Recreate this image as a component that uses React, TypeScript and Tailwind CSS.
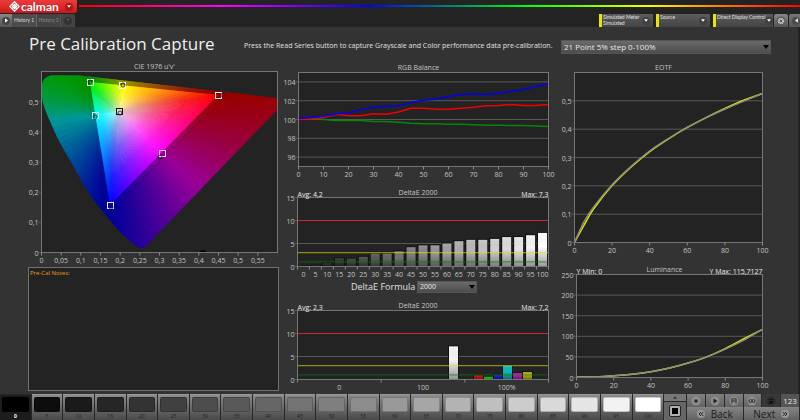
import React from 'react'
import { ChevronsLeft, ChevronsRight } from 'lucide-react'

type Point = [number, number]

type Box = { left: number; top: number; right: number; bottom: number }

type ChartProps = {
  title: string
  width: number
  height: number
  box: Box
  xMax: number
  yMin: number
  yMax: number
  xTicks: { at: number; label: string }[]
  xMarks?: number[]
  yTicks: number[]
  grid?: boolean
  low?: string
  high?: string
  children?: (x: (v: number) => number, y: (v: number) => number) => React.ReactNode
}

const levels = Array.from({ length: 21 }, (_, i) => i * 5)

const gray = (level: number) => {
  const c = Math.round(level * 2.55)
  return `rgb(${c},${c},${c})`
}

const redBalance = [100, 100.05, 100.2, 100.55, 100.4, 100.4, 100.6, 100.55, 100.8, 101.2, 101.2, 101.1, 101.1, 101.2, 101.3, 101.45, 101.5, 101.6, 101.5, 101.5, 101.6]
const greenBalance = [100.05, 100.05, 100, 99.9, 99.9, 99.9, 99.8, 99.8, 99.7, 99.6, 99.55, 99.55, 99.5, 99.5, 99.45, 99.4, 99.4, 99.35, 99.35, 99.3, 99.25]
const blueBalance = [100.1, 100.2, 100.35, 100.6, 100.7, 101.05, 101.3, 101.4, 101.45, 101.8, 102.05, 102.15, 102.45, 102.65, 102.75, 102.65, 102.8, 103, 103.2, 103.5, 103.8]
const grayDelta = [0, 0.2, 0.7, 1.8, 1.7, 2.1, 2.8, 2.8, 3.3, 4.2, 4.6, 4.6, 5, 5.5, 5.8, 5.8, 6, 6.4, 6.4, 6.8, 7.3]

const colorDelta = [
  { x: 168, value: 7.2, fill: '#f4f4f4' },
  { x: 193, value: 0.9, fill: '#c01010' },
  { x: 203, value: 0.6, fill: '#18b818' },
  { x: 213, value: 1, fill: '#1818c8' },
  { x: 222, value: 3, fill: '#10b8b8' },
  { x: 232, value: 1.4, fill: '#b818b8' },
  { x: 242, value: 1.6, fill: '#b8b010' },
]

const eotf: Point[] = [[0, 0], [5, 0.073], [10, 0.124], [20, 0.204], [30, 0.268], [40, 0.323], [50, 0.367], [60, 0.406], [70, 0.441], [80, 0.471], [90, 0.499], [100, 0.526]]
const eotfMeasured: Point[] = [[0, 0], [5, 0.06], [10, 0.117], [20, 0.201], [30, 0.266], [40, 0.321], [50, 0.366], [60, 0.406], [70, 0.441], [80, 0.473], [90, 0.502], [100, 0.526]]
const luminance: Point[] = [[0, 1], [10, 1.5], [20, 4], [30, 8], [40, 14], [50, 23], [60, 35], [70, 50], [80, 69], [90, 91], [100, 117]]
const luminanceMeasured: Point[] = [[0, 1], [10, 1.5], [20, 4], [30, 8], [40, 14], [50, 23], [60, 35], [70, 50], [80, 70], [90, 94], [100, 117]]

const line = (points: Point[], x: (v: number) => number, y: (v: number) => number) =>
  points.map(([a, b]) => `${x(a)},${y(b)}`).join(' ')

// Catmull-Rom spline through the points, written as cubic segments
const curve = (points: Point[], x: (v: number) => number, y: (v: number) => number) => {
  const p = points.map(([a, b]) => [x(a), y(b)])
  let d = `M${p[0]}`
  for (let i = 0; i < p.length - 1; i++) {
    const before = p[Math.max(i - 1, 0)]
    const after = p[Math.min(i + 2, p.length - 1)]
    const c1 = p[i].map((v, n) => v + (p[i + 1][n] - before[n]) / 6)
    const c2 = p[i + 1].map((v, n) => v - (after[n] - p[i][n]) / 6)
    d += `C${c1} ${c2} ${p[i + 1]}`
  }
  return d
}

const series = (values: number[]): Point[] => values.map((v, i) => [i * 5, v])

const steps = (from: number, to: number, by: number) => {
  const out = []
  for (let v = from; v <= to; v += by) out.push({ at: v, label: String(v) })
  return out
}

const Chart = ({ title, width, height, box, xMax, yMin, yMax, xTicks, xMarks, yTicks, grid = true, low, high, children }: ChartProps) => {
  const x = (v: number) => box.left + (v / xMax) * (box.right - box.left)
  const y = (v: number) => box.bottom - ((v - yMin) / (yMax - yMin)) * (box.bottom - box.top)
  const marks = xMarks ?? xTicks.map((t) => t.at)

  return (
    <svg viewBox={`0 0 ${width} ${height}`} className="block h-auto w-full text-[7px]" role="img" aria-label={title}>
      <rect x={box.left} y={box.top} width={box.right - box.left} height={box.bottom - box.top} fill="#232323" />
      {yTicks.map((t) => (
        <g key={t}>
          <line x1={box.left - 3} x2={grid ? box.right : box.left} y1={y(t)} y2={y(t)} stroke="#585858" />
          <text x={box.left - 3} y={y(t) + 3} textAnchor="end" fill="#c4c4c4">
            {String(t).replace('.', ',')}
          </text>
        </g>
      ))}
      {children?.(x, y)}
      <rect x={box.left} y={box.top} width={box.right - box.left} height={box.bottom - box.top} fill="none" stroke="#767676" />
      {marks.map((m) => (
        <line key={m} x1={x(m)} x2={x(m)} y1={box.bottom} y2={box.bottom + 3} stroke="#8a8a8a" />
      ))}
      {xTicks.map((t) => (
        <text key={t.label} x={x(t.at)} y={box.bottom + 10} textAnchor="middle" fill="#c4c4c4">
          {t.label}
        </text>
      ))}
      <text x={(box.left + box.right) / 2 - 5} y={box.top - 3} textAnchor="middle" fill="#c4c4c4">
        {title}
      </text>
      {low && <text x={box.left} y={box.top - 1} fill="#ececec">{low}</text>}
      {high && <text x={box.right} y={box.top - 1} textAnchor="end" fill="#ececec">{high}</text>}
    </svg>
  )
}

// Gamut corners and edge midpoints, clockwise from green.
// hold: how long a primary keeps its hue outside the gamut before it turns into the next mix
const gamut: { at: Point; rgb: number[]; hold: number }[] = [
  { at: [90, 22], rgb: [0, 255, 0], hold: 1.5 },
  { at: [122, 25], rgb: [255, 255, 0], hold: 1.7 },
  { at: [218, 35], rgb: [255, 0, 0], hold: 1.7 },
  { at: [162, 93], rgb: [255, 0, 255], hold: 1.5 },
  { at: [110, 145], rgb: [0, 0, 255], hold: 3 },
  { at: [95, 55], rgb: [0, 255, 255], hold: 3.2 },
]
const white: Point = [119, 52]
const locus = 'M138 187 C126 179 119 171 110 160 C101 149 94 141 87 130 C80 119 76 111 70 100 C63 88 58 80 53 68 C48 56 45 50 43 43 C41 34 41 27 43 21 Q46 15 55 15.3 L80 15.6 L277 38 L277 50 L146 186 Q142 190 138 187 Z'

const wedgeCount = 40

const gamutWedges = gamut.flatMap((from, i) => {
  const to = gamut[(i + 1) % gamut.length]
  const at = (t: number): Point => [
    from.at[0] + (to.at[0] - from.at[0]) * t,
    from.at[1] + (to.at[1] - from.at[1]) * t,
  ]
  return Array.from({ length: wedgeCount }, (_, k) => {
    const mid = (k + 0.5) / wedgeCount
    const mix = i % 2 === 0 ? mid ** from.hold : 1 - (1 - mid) ** from.hold
    const rgb = from.rgb.map((c, n) => c + (to.rgb[n] - c) * mid)
    const tint = (amount: number) => `rgb(${rgb.map((c) => Math.round(255 + (c - 255) * amount)).join(',')})`
    return {
      id: `wedge-${i}-${k}`,
      start: at(k / wedgeCount),
      end: at((k + 1.5) / wedgeCount),
      middle: at(mid),
      half: tint(0.6),
      most: tint(0.88),
      full: tint(1),
      outer: `rgb(${from.rgb.map((c, n) => Math.round((c + (to.rgb[n] - c) * mix) * 0.6)).join(',')})`,
    }
  })
})

const beyond = (p: Point, scale: number): Point => [
  white[0] + (p[0] - white[0]) * scale,
  white[1] + (p[1] - white[1]) * scale,
]

const CieDiagram = () => (
  <Chart
    title="CIE 1976 u'v'"
    width={281}
    height={207}
    box={{ left: 41.5, top: 11.5, right: 277.5, bottom: 192.5 }}
    xMax={0.6}
    yMin={0}
    yMax={0.6}
    xTicks={Array.from({ length: 12 }, (_, i) => ({ at: i * 0.05, label: String(Math.round(i * 5) / 100).replace('.', ',') }))}
    yTicks={[0, 0.1, 0.2, 0.3, 0.4, 0.5]}
    grid={false}
  >
    {() => (
      <>
        <defs>
          <clipPath id="locus">
            <path d={locus} />
          </clipPath>
          <clipPath id="gamut">
            <path d="M90 22 218 35 110 145Z" />
          </clipPath>
          {gamutWedges.map((w) => (
            <linearGradient key={w.id} id={w.id} gradientUnits="userSpaceOnUse" x1={white[0]} y1={white[1]} x2={w.middle[0]} y2={w.middle[1]}>
              <stop offset="0" stopColor="#fff" />
              <stop offset="0.4" stopColor={w.half} />
              <stop offset="0.7" stopColor={w.most} />
              <stop offset="1" stopColor={w.full} />
            </linearGradient>
          ))}
        </defs>
        <g clipPath="url(#locus)">
          {gamutWedges.map((w) => (
            <polygon key={w.id} points={[white, beyond(w.start, 12), beyond(w.end, 12)].join(' ')} fill={w.outer} />
          ))}
        </g>
        <g clipPath="url(#gamut)">
          {gamutWedges.map((w) => (
            <polygon key={w.id} points={[white, beyond(w.start, 1.2), beyond(w.end, 1.2)].join(' ')} fill={`url(#${w.id})`} />
          ))}
        </g>
        {gamut.map(({ at: [cx, cy] }, i) => (
          <rect key={i} x={cx - 2.5} y={cy - 2.5} width="6" height="6" fill="none" stroke="#f0f0f0" />
        ))}
        <rect x="116.5" y="48.5" width="6" height="6" fill="none" stroke="#111" />
        {[[90, 22], [123, 25], [223, 35], [160, 97], [111, 147], [95, 57], [120, 53]].map(([cx, cy]) => (
          <circle key={`${cx}-${cy}`} cx={cx} cy={cy} r="2" fill="none" stroke="#222" strokeOpacity="0.8" />
        ))}
        <path d="M200 192 a3 2 0 0 1 6 0Z" fill="#000" />
      </>
    )}
  </Chart>
)

const Thresholds = ({ left, right, y }: { left: number; right: number; y: (v: number) => number }) => (
  <>
    <line x1={left} x2={right} y1={y(10)} y2={y(10)} stroke="#c92a2a" />
    <line x1={left} x2={right} y1={y(3)} y2={y(3)} stroke="#e0e000" strokeOpacity="0.7" />
    <line x1={left} x2={right} y1={y(1)} y2={y(1)} stroke="#0a7a0a" strokeOpacity="0.7" />
  </>
)

const DeltaChart = ({ low, high, color }: { low: string; high: string; color?: boolean }) => (
  <Chart
    title="DeltaE 2000"
    width={276}
    height={97}
    box={{ left: 16.5, top: 17.5, right: 267.5, bottom: 86.5 }}
    xMax={color ? 3 : 21}
    yMin={0}
    yMax={15}
    xTicks={color ? ['0', '100', '100%'].map((label, i) => ({ at: i + 0.5, label })) : levels.map((l, i) => ({ at: i + 0.5, label: String(l) }))}
    xMarks={color ? [0, 1, 2, 3] : Array.from({ length: 22 }, (_, i) => i)}
    yTicks={[0, 5, 10, 15]}
    low={low}
    high={high}
  >
    {(x, y) => (
      <>
        <defs>
          <linearGradient id="bar-shade" x1="0" x2="0" y1="0" y2="1">
            <stop offset="0" stopColor="#fff" stopOpacity="0.1" />
            <stop offset="0.4" stopColor="#000" stopOpacity="0" />
            <stop offset="1" stopColor="#000" stopOpacity="0.4" />
          </linearGradient>
        </defs>
        {(color ? colorDelta : grayDelta.map((value, i) => ({ x: x(i) + 1.5, value, fill: gray(7 + levels[i] * 0.93) }))).map((bar) => (
          <g key={bar.x}>
            <rect x={bar.x - 1} y={y(bar.value) - 1} width="11" height={y(0) - y(bar.value) + 1} fill="#111" />
            {[bar.fill, 'url(#bar-shade)'].map((fill) => (
              <rect key={fill} x={bar.x} y={y(bar.value)} width="9" height={y(0) - y(bar.value)} fill={fill} />
            ))}
          </g>
        ))}
        <Thresholds left={16} right={268} y={y} />
      </>
    )}
  </Chart>
)

const Dropdown = ({ id, label, value, options, className }: { id: string; label: string; value: string; options: string[]; className: string }) => (
  <div className={`relative ${className}`}>
    <select
      id={id}
      defaultValue={value}
      aria-label={label}
      className="block h-full w-full appearance-none border border-[#555] bg-linear-to-b from-[#6b6b6b] to-[#4c4c4c] pl-0.5 text-[#e8e8e8]"
    >
      {options.map((o) => (
        <option key={o}>{o}</option>
      ))}
    </select>
    <span className="pointer-events-none absolute inset-y-0 right-0.5 flex items-center text-black">
      <svg viewBox="0 0 6 4" className="h-1 w-1.5" aria-hidden="true">
        <path d="M0 0h6L3 4z" fill="currentColor" />
      </svg>
    </span>
  </div>
)

const DeviceButton = ({ lines, className }: { lines: string[]; className: string }) => (
  <button className={`flex h-[13px] items-center justify-between border-l-3 border-[#e6e600] bg-linear-to-b from-[#5c5c5c] to-[#444] pr-[3px] pl-px text-left font-['Lato'] text-[5px] leading-[6px] whitespace-nowrap text-[#e0e0e0] ${className}`}>
    <span className="self-start">
      {lines.map((l) => (
        <span key={l} className="block">{l}</span>
      ))}
    </span>
    <span className="flex size-2 shrink-0 items-center justify-center rounded-full bg-[#404040] text-white">
      <svg viewBox="0 0 6 4" className="h-[3px] w-1" aria-hidden="true">
        <path d="M0 0h6L3 4z" fill="currentColor" />
      </svg>
    </span>
  </button>
)

const Logo = () => (
  <svg viewBox="0 0 12 12" className="size-[11px]" fill="none" stroke="#fff" strokeWidth="1.300" aria-hidden="true">
    <path d="M6 0.800 11.200 6 6 11.200 0.800 6zM3.400 3.400 8.600 8.600M8.600 3.400 3.400 8.600" />
    <path d="M6 3.600 8.400 6 6 8.400 3.600 6z" />
  </svg>
)

const Header = () => (
  <header className="bg-[#232323]">
    <div className="flex h-[13px]">
      <button className="flex w-[77px] shrink-0 items-center rounded-br-xs bg-linear-to-b from-[#ea3a3a] to-[#cc1717] pl-[9px] text-white">
        <Logo />
        <span className="ml-px font-['Lato'] text-[12px] leading-[12px] font-bold">calman</span>
        <span className="ml-auto mr-1 flex size-2 items-center justify-center rounded-full bg-[#b01515]">
          <svg viewBox="0 0 6 4" className="h-[3px] w-1" aria-hidden="true">
            <path d="M0 0h6L3 4z" fill="#fff" />
          </svg>
        </span>
      </button>
      <div className="mt-[5px] ml-0.5 h-0.5 flex-1 bg-[linear-gradient(90deg,#f00,#f0f_20%,#00f_40%,#0f0_62%,#ff0_79%,#f80_88%,#f00)]"></div>
    </div>
    <div className="flex h-3.5 items-end justify-between">
      <nav className="flex h-[13px] items-stretch font-['Lato'] text-[5px]">
        <button aria-label="Play" className="flex w-3 items-center justify-center bg-linear-to-b from-[#888] to-[#555]">
          <span className="flex size-2 items-center justify-center rounded-full bg-[#444]">
            <svg viewBox="0 0 4 6" className="h-[5px] w-[3px]" aria-hidden="true">
              <path d="M0 0v6l4-3z" fill="#fff" />
            </svg>
          </span>
        </button>
        <button className="w-[25px] border-r border-[#666] bg-[#4c4c4c] whitespace-nowrap text-[#ddd]">History 1</button>
        <button className="w-6 border-r border-[#555] bg-[#444] whitespace-nowrap text-[#888]">History 2</button>
        <button aria-label="Add history" className="flex w-3.5 items-center justify-center rounded-tr-xs bg-[#444]">
          <span className="flex size-2 items-center justify-center rounded-full bg-[#333] leading-none text-[#777]">+</span>
        </button>
      </nav>
      <div className="flex gap-[3px]">
        <DeviceButton className="w-[54px]" lines={['Simulated Meter', 'Simulated']} />
        <DeviceButton className="w-[54px]" lines={['Source']} />
        <DeviceButton className="w-[60px]" lines={['Direct Display Control']} />
        <div className="-ml-0.5 flex gap-px">
          <button aria-label="Settings" className="flex h-[13px] w-3.5 items-center justify-center rounded-t-xs bg-linear-to-b from-[#888] to-[#555]">
            <svg viewBox="0 0 10 10" className="size-2.5" aria-hidden="true">
              <circle cx="5" cy="5" r="4.500" fill="#5a5a5a" />
              <circle cx="5" cy="5" r="2.600" fill="none" stroke="#ccc" strokeWidth="1.500" strokeDasharray="1.300 0.740" />
              <circle cx="5" cy="5" r="1.800" fill="none" stroke="#ccc" strokeWidth="0.800" />
            </svg>
          </button>
          <button aria-label="Collapse" className="flex h-[13px] w-[11px] items-center justify-end rounded-tl-xs bg-linear-to-b from-[#777] to-[#555]">
            <span className="flex size-2 items-center justify-center rounded-full bg-[#4c4c4c]">
              <svg viewBox="0 0 4 6" className="h-[5px] w-[3px]" aria-hidden="true">
                <path d="M4 0v6L0 3z" fill="#eee" />
              </svg>
            </span>
          </button>
        </div>
      </div>
    </div>
  </header>
)

const transport = [
  { name: 'Stop', d: 'M3.500 3.500h3v3h-3z' },
  { name: 'Play', d: 'M3.500 2.500v5l4-2.500z' },
  { name: 'Read series', d: 'M2.500 2.500h1v5h-1zM6.500 2.500h1v5h-1zM4 4.500h2v1h-2zM3.500 2.500h3v0.700h-3z' },
  { name: 'Loop', d: 'M2 5a1.500 1.500 0 0 1 3 0a1.500 1.500 0 0 1-3 0zM5 5a1.500 1.500 0 0 1 3 0a1.500 1.500 0 0 1-3 0z' },
  { name: 'Auto', d: 'M3 3h4v1h-4zM3 5h4v2.500h-4z' },
]

const Footer = () => (
  <footer className="grid h-[26px] grid-cols-[664fr_22fr_112fr] gap-px bg-[#282828] pr-px">
    <div className="flex gap-px">
      {levels.map((l) => (
        <button
          key={l}
          className={
            l === 0
              ? 'flex min-w-0 flex-1 flex-col border-t border-[#282828] bg-[#1c1c1c] p-0.5 pb-0 text-center text-[5px] font-bold text-white'
              : 'flex min-w-0 flex-1 flex-col border-t border-[#999] bg-linear-to-b from-[#8c8c8c] to-[#4a4a4a] p-0.5 pb-0 text-center text-[5px] text-[#222]'
          }
        >
          <span className="h-[15px] w-full rounded-xs border border-black/20" style={{ backgroundColor: gray(l) }}></span>
          <span className="w-full leading-[8px]">{l}</span>
        </button>
      ))}
    </div>
    <div className="flex flex-col gap-px">
      <button aria-label="Expand" className="flex h-[7px] items-center justify-center bg-[#777] text-[#333]">
        <svg viewBox="0 0 6 4" className="h-[3px] w-1" aria-hidden="true">
          <path d="M0 4h6L3 0z" fill="currentColor" />
        </svg>
      </button>
      <button aria-label="Pattern window" className="flex flex-1 items-center justify-center bg-[#666]">
        <span className="flex size-3 items-center justify-center rounded-xs border border-[#222] bg-[#b0b0b0]">
          <span className="size-1.5 bg-black"></span>
        </span>
      </button>
    </div>
    <div className="flex flex-col">
      <div className="flex h-[13px] gap-px">
        {transport.map((t) => (
          <button
            key={t.name}
            aria-label={t.name}
            className={
              t.name === 'Auto'
                ? 'flex flex-1 items-center justify-center bg-[#383838]'
                : 'flex flex-1 items-center justify-center bg-linear-to-b from-[#808080] to-[#636363]'
            }
          >
            <svg viewBox="0 0 10 10" className="size-2.5" aria-hidden="true">
              <circle cx="5" cy="5" r="4.500" fill={t.name === 'Auto' ? '#2c2c2c' : '#8e8e8e'} />
              <path d={t.d} fill={t.name === 'Loop' ? 'none' : t.name === 'Auto' ? '#111' : '#222'} stroke={t.name === 'Loop' ? '#333' : 'none'} />
            </svg>
          </button>
        ))}
        <button className="flex-1 bg-[#555] text-[8px] text-[#e8e8e8]">123</button>
      </div>
      <div className="flex h-[13px] gap-px text-[10px] leading-[12px] text-[#1c1c1c]">
        <button className="flex flex-1 items-center justify-center gap-1.5 bg-linear-to-b from-[#858585] to-[#626262]">
          <span className="rounded-full bg-[#999]"><ChevronsLeft className="size-2" strokeWidth={3} /></span>
          Back
        </button>
        <button className="flex flex-1 items-center justify-center gap-1.5 bg-linear-to-b from-[#858585] to-[#626262]">
          Next
          <span className="rounded-full bg-[#999]"><ChevronsRight className="size-2" strokeWidth={3} /></span>
        </button>
      </div>
    </div>
  </footer>
)

const App = () => {
  return (
    <div className="flex min-h-screen flex-col overflow-hidden bg-[#333] font-['Open_Sans','Noto_Sans',sans-serif] text-[#e0e0e0]">
      <Header />
      <main className="flex-1 border-r-2 border-[#222]">
        <div className="flex h-[33px] items-center pr-[27px] pl-[29px]">
          <h1 className="w-[215px] shrink-0 text-[17px] leading-[24px] whitespace-nowrap text-[#f0f0f0]">Pre Calibration Capture</h1>
          <p className="mt-1.5 min-w-0 flex-1 text-[7px] whitespace-nowrap">
            Press the Read Series button to capture Grayscale and Color performance data pre-calibration.
          </p>
          <Dropdown
            id="series"
            label="Series"
            value="21 Point 5% step 0-100%"
            options={['21 Point 5% step 0-100%', '11 Point 10% step 0-100%']}
            className="mt-1.5 h-3.5 w-[210px] shrink-0 text-[8px] leading-[11px]"
          />
        </div>

        <div className="-mr-0.5 grid grid-cols-[281fr_276fr_243fr]">
          <div className="flex flex-col">
            <CieDiagram />
            <div className="mr-0.5 mb-[3px] ml-7 flex flex-1 flex-col border border-[#707070] bg-[#232323]">
              <label htmlFor="notes" className="pt-px pl-px text-[6px] leading-[9px] text-[#f09a1a]">Pre-Cal Notes:</label>
              <textarea id="notes" className="min-h-0 w-full flex-1 resize-none bg-transparent px-0.5 text-[7px] outline-none"></textarea>
            </div>
          </div>

          <div>
            <Chart
              title="RGB Balance"
              width={276}
              height={120}
              box={{ left: 17.5, top: 12.5, right: 267.5, bottom: 106.5 }}
              xMax={100}
              yMin={95}
              yMax={105}
              xTicks={steps(0, 100, 10)}
              yTicks={[96, 98, 100, 102, 104]}
            >
              {(x, y) => (
                <g fill="none" strokeWidth="1.500">
                  <polyline points={line(series(greenBalance), x, y)} stroke="#0a850a" />
                  <polyline points={line(series(redBalance), x, y)} stroke="#f00000" />
                  <polyline points={line(series(blueBalance), x, y)} stroke="#0000f5" />
                </g>
              )}
            </Chart>
            <DeltaChart low="Avg: 4,2" high="Max: 7,3" />
            <div className="flex h-4 items-center pt-1 pl-[70px] text-[9px]">
              <label htmlFor="formula" className="w-[66px]">DeltaE Formula</label>
              <Dropdown id="formula" label="DeltaE Formula" value="2000" options={['2000', '1994', '1976']} className="h-3 w-[60px] text-[7px] leading-[10px]" />
            </div>
            <DeltaChart low="Avg: 2,3" high="Max: 7,2" color />
          </div>

          <div>
            <Chart
              title="EOTF"
              width={243}
              height={200}
              box={{ left: 17.5, top: 12.5, right: 205.5, bottom: 182.5 }}
              xMax={100}
              yMin={0}
              yMax={0.6}
              xTicks={steps(0, 100, 20)}
              yTicks={[0, 0.1, 0.2, 0.3, 0.4, 0.5]}
            >
              {(x, y) => (
                <g fill="none" strokeWidth="1.500">
                  <path d={curve(eotfMeasured, x, y)} stroke="#e6e600" />
                  <path d={curve(eotf, x, y)} stroke="#8c8c80" />
                </g>
              )}
            </Chart>
            <Chart
              title="Luminance"
              width={243}
              height={134}
              box={{ left: 19.5, top: 14.5, right: 205.5, bottom: 117.5 }}
              xMax={100}
              yMin={0}
              yMax={250}
              xTicks={steps(0, 100, 20)}
              yTicks={[0, 50, 100, 150, 200, 250]}
              low="Y Min: 0"
              high="Y Max: 115,7127"
            >
              {(x, y) => (
                <g fill="none" strokeWidth="1.500">
                  <path d={curve(luminanceMeasured, x, y)} stroke="#e6e600" />
                  <path d={curve(luminance, x, y)} stroke="#8c8c80" />
                </g>
              )}
            </Chart>
          </div>
        </div>
      </main>
      <Footer />
    </div>
  )
}

export default App
